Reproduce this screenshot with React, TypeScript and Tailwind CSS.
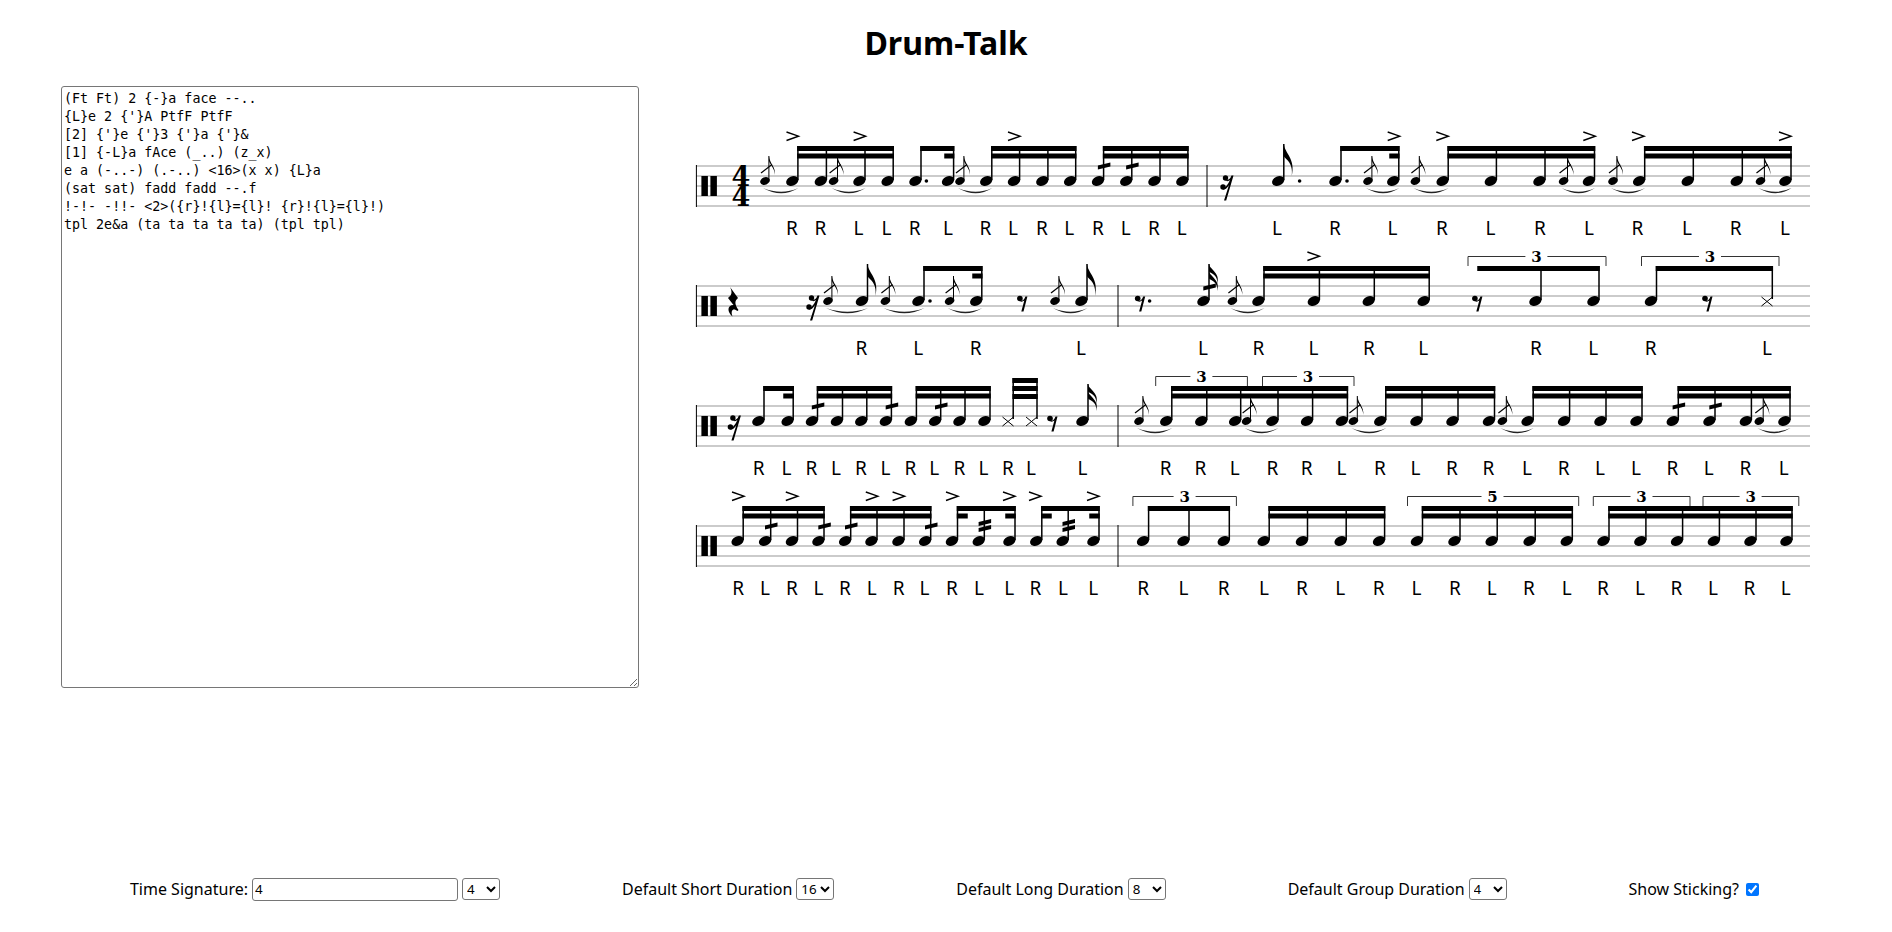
import type { ReactNode } from "react";

type Grace = [number, number];
type Group = { stems: number[]; beams: [number, number, number][]; bottom?: number };
type Tuplet = [number, number, number, string];
type StaffSpec = {
  bar: number;
  timeSig?: boolean;
  groups: Group[];
  flags?: [number, number][];
  graces?: Grace[];
  accents?: number[];
  trems?: [number, number][];
  dots?: number[];
  restQ?: number[];
  rest8?: number[];
  rest16?: number[];
  xHeads?: number[];
  tuplets?: Tuplet[];
  sticks: [string, number][];
};

const B1 = 26;
const B2 = 33.5;

const full = (stems: number[], levels = 2): Group => ({
  stems,
  beams: levels === 2
    ? [[stems[0], stems[stems.length - 1], B1], [stems[0], stems[stems.length - 1], B2]]
    : [[stems[0], stems[stems.length - 1], B1]],
});

const toSticks = (letters: string, xs: number[]): [string, number][] =>
  xs.map((x, i) => [letters[i], x]);

const staves: StaffSpec[] = [
  {
    bar: 1207,
    timeSig: true,
    groups: [
      full([797.9, 826.4, 865, 893.2]),
      { stems: [921, 953.6], beams: [[921, 953.6, B1], [945, 953.6, B2]] },
      full([991.8, 1019.6, 1047.9, 1075.7]),
      full([1103.6, 1131.8, 1160, 1187.9]),
      { stems: [1341, 1398.8], beams: [[1341, 1398.8, B1], [1390, 1398.8, B2]] },
      full([1448.2, 1496.4, 1545, 1594.5]),
      full([1644.7, 1693.3, 1742.3, 1791]),
    ],
    flags: [[1283.8, 1]],
    graces: [[765, 797.9], [833.6, 865], [960, 991.8], [1368, 1398.8], [1415.4, 1448.2], [1563.6, 1594.5], [1613, 1644.7], [1760.5, 1791]],
    accents: [792.5, 859.6, 1014, 1393.7, 1442.3, 1589.3, 1638, 1785],
    trems: [[1103.6, 45], [1131.8, 45]],
    dots: [926.4, 1299.6, 1347],
    rest16: [1228],
    sticks: toSticks("RRLLRLRLRLRLRLLRLRLRLRLRL", [791.8, 820.4, 858.6, 886.4, 914.6, 947.9, 985.4, 1012.9, 1041.8, 1069.3, 1097.9, 1125.7, 1153.9, 1181.8, 1277, 1335, 1392.5, 1442, 1490.5, 1540, 1589, 1637.5, 1687, 1735.6, 1785]),
  },
  {
    bar: 1118,
    groups: [
      { stems: [924, 981.8], beams: [[924, 981.8, B1], [973, 981.8, B2]] },
      full([1264, 1319.4, 1374.3, 1429.2]),
      { stems: [1541, 1599], beams: [[1478, 1599, B1]] },
      { stems: [1656.5, 1772.3], beams: [[1656.5, 1772.3, B1]] },
    ],
    flags: [[867.5, 1], [1087, 1], [1209, 2]],
    graces: [[828, 867.5], [885.4, 924], [949.6, 981.8], [1055, 1087], [1232.4, 1264]],
    accents: [1313.4],
    trems: [[1209, 46]],
    dots: [930, 1149.6],
    restQ: [733],
    rest8: [1022.9, 1140.7, 1477.9, 1708],
    rest16: [814],
    xHeads: [1767],
    tuplets: [[1468, 1606, 1536.4, "3"], [1641.5, 1779, 1710, "3"]],
    sticks: toSticks("RLRLLRLRLRLRL", [861.4, 918.2, 975.7, 1081, 1203, 1258.5, 1313.4, 1368.8, 1423.3, 1536, 1593.3, 1650.6, 1767]),
  },
  {
    bar: 1118,
    groups: [
      { stems: [764, 793.2], beams: [[764, 793.2, B1], [784, 793.2, B2]] },
      full([817.5, 842.5, 866.8, 891.4]),
      full([916.4, 940.7, 965, 990]),
      { stems: [1013.2, 1037], bottom: 57, beams: [[1013.2, 1037, 18], [1013.2, 1037, 26], [1013.2, 1037, 34]] },
      full([1171.8, 1206.8, 1240.7, 1278, 1312.6, 1347.4]),
      full([1385.8, 1422, 1458, 1494.5]),
      full([1533.2, 1569.6, 1606, 1642]),
      full([1678.3, 1715, 1751.4, 1790]),
    ],
    flags: [[1088, 2]],
    graces: [[1139, 1171.8], [1246.6, 1278], [1353.4, 1385.8], [1502.4, 1533.2], [1759.3, 1790]],
    trems: [[817.5, 45], [891.4, 45], [940.7, 45], [1678.3, 45], [1715, 45]],
    rest8: [1053],
    rest16: [735.4],
    xHeads: [1008, 1031.5],
    tuplets: [[1155.7, 1247.4, 1201.4, "3"], [1262.5, 1354, 1308, "3"]],
    sticks: toSticks("RLRLRLRLRLRLLRRLRRLRLRRLRLLRLRL", [758.6, 786.4, 811.4, 836, 861, 885.4, 910.4, 934.3, 959.3, 983.6, 1007.9, 1031, 1082.5, 1165.7, 1200.4, 1234.8, 1272.3, 1306.7, 1341.5, 1379.8, 1415.4, 1451.8, 1488.5, 1526.9, 1563.6, 1600, 1636, 1672.3, 1708.7, 1745.5, 1783.8]),
  },
  {
    bar: 1118,
    groups: [
      full([743.2, 770.7, 797.5, 824]),
      full([850.7, 877, 904, 930.7]),
      { stems: [957.5, 984.3, 1015], beams: [[957.5, 1015, B1], [957.5, 967, B2], [1006, 1015, B2]] },
      { stems: [1041.8, 1068.2, 1099], beams: [[1041.8, 1099, B1], [1041.8, 1051, B2], [1090, 1099, B2]] },
      full([1148.6, 1189, 1229.3], 1),
      full([1269.2, 1307.5, 1346.2, 1384.6]),
      full([1422.5, 1460, 1497.2, 1535.2, 1572.3]),
      full([1609, 1645.9, 1682.6, 1719.4, 1756, 1792]),
    ],
    accents: [738, 791.8, 871.8, 898.6, 952, 1009, 1035, 1093],
    trems: [[770.7, 45], [824, 45], [850.7, 45], [930.7, 45], [984.3, 41.5], [984.3, 47.5], [1068.2, 41.5], [1068.2, 47.5]],
    tuplets: [[1132.9, 1236.4, 1184.6, "3"], [1407.5, 1578.7, 1492.5, "5"], [1593.3, 1690, 1641.5, "3"], [1703, 1798.8, 1750.6, "3"]],
    sticks: toSticks("RLRLRLRLRLLRLLRLRLRLRLRLRLRLRLRL", [738.2, 765, 791.8, 818.6, 845, 871.8, 898.6, 924.6, 952, 979, 1009.3, 1035.4, 1062.9, 1093.2, 1143.2, 1183.6, 1223.6, 1264, 1302, 1340.3, 1378.7, 1416.6, 1455, 1491.7, 1528.9, 1566.8, 1603, 1640, 1676.3, 1713, 1749.4, 1785.8]),
  },
];

function Head({ x }: { x: number }) {
  return <ellipse cx={x} cy={61} rx={6.4} ry={4.6} transform={`rotate(-22 ${x} 61)`} fill="#000" />;
}

function GraceNote({ x, stem }: { x: number; stem: number }) {
  const s = x + 3.9;
  return (
    <g>
      <ellipse cx={x} cy={61} rx={5} ry={3.7} transform={`rotate(-22 ${x} 61)`} fill="#000" />
      <line x1={s} y1={60} x2={s} y2={36} stroke="#000" strokeWidth={1} />
      <path d={`M${s} 36C${s + 1} 44 ${s + 7} 47 ${s + 6} 55C${s + 6} 49 ${s + 1.5} 45 ${s} 41Z`} fill="#000" />
      <line x1={x - 4} y1={53} x2={x + 7} y2={44.5} stroke="#000" strokeWidth={1.2} />
      <path d={`M${x - 2} 68Q${(x + stem) / 2} 78.5 ${stem + 0.5} 68Q${(x + stem) / 2} 75.5 ${x - 2} 68Z`} fill="#222" />
    </g>
  );
}

function Flag({ x, top, len }: { x: number; top: number; len: number }) {
  return (
    <path
      d={`M${x} ${top}C${x + 1} ${top + len * 0.3} ${x + 12} ${top + len * 0.45} ${x + 8} ${top + len}C${x + 9.5} ${top + len * 0.6} ${x + 3} ${top + len * 0.5} ${x} ${top + len * 0.38}Z`}
      fill="#000"
    />
  );
}

function Rest8({ x }: { x: number }) {
  return (
    <g fill="#000">
      <circle cx={x - 3} cy={58.5} r={2.8} />
      <path d={`M${x - 3} 61Q${x + 1} 61 ${x + 2.5} 56.5L${x + 4.5} 56.5L${x + 0.6} 71.5L${x - 1.6} 71.5L${x + 1.4} 60.5Q${x - 1} 62.5 ${x - 3} 61Z`} />
    </g>
  );
}

function Rest16({ x }: { x: number }) {
  return (
    <g fill="#000">
      <circle cx={x - 2.5} cy={58} r={2.7} />
      <circle cx={x - 5} cy={67} r={2.7} />
      <path d={`M${x - 2.5} 60.5Q${x + 2} 60 ${x + 3.5} 55.5L${x + 5.5} 55.5L${x - 1.8} 80.5L${x - 4} 80.5L${x + 1} 65Q${x - 2} 70 ${x - 5} 69.5L${x - 5} 68Q${x - 1} 67 ${x + 2} 60Q${x} 62 ${x - 2.5} 60.5Z`} />
    </g>
  );
}

function RestQ({ x }: { x: number }) {
  return (
    <path
      d={`M${x - 3} 47L${x + 5} 58C${x + 1.5} 61 ${x + 1.5} 64 ${x + 5.5} 70L${x + 4.5} 71C${x + 1} 68 ${x - 3} 69 ${x - 0.5} 76.5C${x - 6} 72 ${x - 6} 65 ${x + 0.5} 65L${x - 5} 58C${x - 1} 55 ${x - 0.5} 52 ${x - 3} 47Z`}
      fill="#000"
    />
  );
}

function Staff({ spec }: { spec: StaffSpec }) {
  const items: ReactNode[] = [];

  spec.groups.forEach((g, gi) => {
    g.stems.forEach((s, si) => {
      const isX = spec.xHeads?.some((x) => Math.abs(x + 5.5 - s) < 1.5);
      items.push(
        <line key={`s${gi}-${si}`} x1={s} y1={g.beams[0][2]} x2={s} y2={isX || g.bottom ? 59 : 60} stroke="#000" strokeWidth={1.5} />,
      );
      if (!isX && !g.bottom) items.push(<Head key={`h${gi}-${si}`} x={s - 5.6} />);
    });
    g.beams.forEach((b, bi) => {
      items.push(<rect key={`b${gi}-${bi}`} x={b[0] - 0.75} y={b[2]} width={b[1] - b[0] + 1.5} height={5} fill="#000" />);
    });
  });

  return (
    <svg width={1130} height={120} viewBox="690 0 1130 120" className="block font-['Noto_Sans',sans-serif]">
      {[46, 56, 66, 76, 86].map((y) => (
        <line key={y} x1={696} y1={y} x2={1810} y2={y} stroke="#cbcbcb" strokeWidth={2} />
      ))}
      <line x1={696.4} y1={45} x2={696.4} y2={87} stroke="#000" strokeWidth={1} />
      <line x1={spec.bar} y1={45} x2={spec.bar} y2={87} stroke="#000" strokeWidth={1} />
      <rect x={701.4} y={56} width={6.5} height={20} fill="#000" />
      <rect x={710.4} y={56} width={6.5} height={20} fill="#000" />

      {spec.timeSig && (
        <g className="font-['DejaVu_Serif',serif] font-bold text-[27px]" textAnchor="middle" fill="#000">
          <text x={741} y={66}>4</text>
          <text x={741} y={86}>4</text>
        </g>
      )}

      {items}

      {spec.flags?.map(([s, n]) => (
        <g key={s}>
          <line x1={s} y1={24} x2={s} y2={60} stroke="#000" strokeWidth={1.5} />
          <Head x={s - 5.6} />
          {n === 1 && <Flag x={s} top={24} len={32} />}
          {n > 1 && <Flag x={s} top={24} len={20} />}
          {n > 1 && <Flag x={s} top={31} len={20} />}
        </g>
      ))}
      {spec.graces?.map(([x, s]) => <GraceNote key={x} x={x} stem={s} />)}
      {spec.accents?.map((x) => (
        <path key={x} d={`M${x - 6} 12L${x + 6} 16.2L${x - 6} 20.5`} fill="none" stroke="#000" strokeWidth={1.4} />
      ))}
      {spec.trems?.map(([x, y], i) => (
        <polygon key={i} points={`${x - 5.7},${y + 0.5} ${x + 6.8},${y - 2.5} ${x + 6.8},${y + 1.5} ${x - 5.7},${y + 4.5}`} fill="#000" />
      ))}
      {spec.dots?.map((x) => <circle key={x} cx={x} cy={61} r={1.8} fill="#000" />)}
      {spec.restQ?.map((x) => <RestQ key={x} x={x} />)}
      {spec.rest8?.map((x) => <Rest8 key={x} x={x} />)}
      {spec.rest16?.map((x) => <Rest16 key={x} x={x} />)}
      {spec.xHeads?.map((x) => (
        <path key={x} d={`M${x - 5.5} 57L${x + 5.5} 66M${x + 5.5} 57L${x - 5.5} 66`} stroke="#000" strokeWidth={1} fill="none" />
      ))}
      {spec.tuplets?.map(([a, b, t, label]) => (
        <g key={a}>
          <path d={`M${a} 26V16.5H${t - 11}M${t + 11} 16.5H${b}V26`} fill="none" stroke="#333" strokeWidth={1} />
          <text x={t} y={22} textAnchor="middle" fill="#000" className="font-['DejaVu_Serif',serif] font-bold text-[15px]">{label}</text>
        </g>
      ))}
      {spec.sticks.map(([s, x], i) => (
        <text key={i} x={x} y={115} textAnchor="middle" fill="#000" className="text-[19px]">{s}</text>
      ))}
    </svg>
  );
}

const source = `(Ft Ft) 2 {-}a face --..
{L}e 2 {'}A PtfF PtfF
[2] {'}e {'}3 {'}a {'}&
[1] {-L}a fAce (_..) (z_x)
e a (-..-) (.-..) <16>(x x) {L}a
(sat sat) fadd fadd --.f
!-!- -!!- <2>({r}!{l}={l}! {r}!{l}={l}!)
tpl 2e&a (ta ta ta ta ta) (tpl tpl)`;

function DurationSelect({ value }: { value: string }) {
  return (
    <select defaultValue={value} className="h-[22px] w-[38px] border border-[#767676] rounded-[3px] bg-white text-[13.33px]">
      {["1", "2", "4", "8", "16"].map((o) => (
        <option key={o} value={o}>{o}</option>
      ))}
    </select>
  );
}

export default function App() {
  return (
    <div className="h-[932px] bg-white text-black font-['Noto_Sans',sans-serif] overflow-hidden">
      <h1 className="text-center text-[32px] font-bold leading-[44px] pt-[21px] pb-[21px]">Drum-Talk</h1>

      <div className="flex h-[602px]">
        <textarea
          spellCheck={false}
          defaultValue={source}
          className="ml-[61px] w-[578px] h-[602px] border border-[#767676] rounded-[3px] px-[2px] pt-[3px] pb-[2px] resize font-['DejaVu_Sans_Mono',monospace] text-[13.33px] leading-[18px]"
        />
        <div className="ml-[51px] pt-[34px]">
          {staves.map((spec, i) => (
            <Staff key={i} spec={spec} />
          ))}
        </div>
      </div>

      <div className="mt-[189px] px-2 flex items-center justify-evenly text-base">
        <div className="flex items-center gap-1">
          <label>Time Signature:</label>
          <input defaultValue="4" className="w-[206px] h-[23px] border border-[#767676] rounded-[3px] px-[2px] text-[13.33px]" />
          <DurationSelect value="4" />
        </div>
        <div className="flex items-center gap-1">
          <label>Default Short Duration</label>
          <DurationSelect value="16" />
        </div>
        <div className="flex items-center gap-1">
          <label>Default Long Duration</label>
          <DurationSelect value="8" />
        </div>
        <div className="flex items-center gap-1">
          <label>Default Group Duration</label>
          <DurationSelect value="4" />
        </div>
        <div className="flex items-center gap-1">
          <label>Show Sticking?</label>
          <input type="checkbox" defaultChecked className="ml-[3px] mr-[3px] w-[13px] h-[13px]" />
        </div>
      </div>
    </div>
  );
}
